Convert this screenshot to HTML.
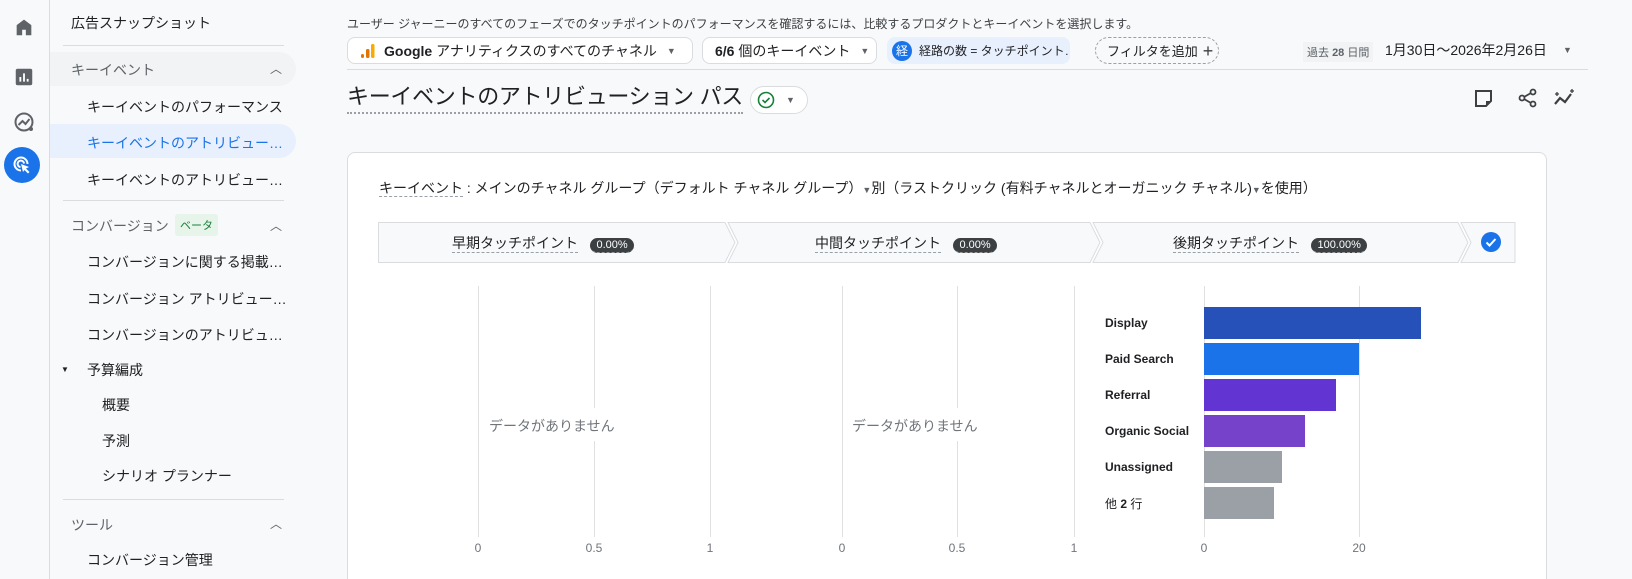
<!DOCTYPE html>
<html style="overflow:hidden;height:579px"><head><meta charset="utf-8">
<style>
*{margin:0;padding:0;box-sizing:border-box}
body{width:1632px;height:579px;overflow:hidden;background:#f8f9fa;font-family:"Liberation Sans","Noto Sans CJK JP",sans-serif;color:#3c4043;position:relative}
.a{position:absolute;white-space:nowrap}
.rail{left:0;top:0;width:50px;height:579px;border-right:1px solid #dadce0;background:#f8f9fa}
.nav{font-size:14px;color:#202124}
.sec{font-size:14px;color:#5f6368}
.div{height:1px;background:#dadce0;left:63px;width:221px}
.chev{font-size:12px;color:#5f6368}
.chip{border:1px solid #dadce0;border-radius:8px;background:#fff;height:27px;top:37px;font-size:14px;color:#202124;display:flex;align-items:center;padding-left:12px;overflow:hidden}
.grid{width:1px;background:#e0e0e0;top:286px;height:251px}
.ax{font-size:12px;color:#70757a;top:541px;transform:translateX(-50%)}
.bar{left:1204px;height:32px}
.bl{font-size:12px;color:#202124;font-weight:bold;left:1105px}
.badge{background:#3c4043;color:#fff;font-size:11px;border-radius:8px;padding:1px 6px;border-bottom:1px dashed #999}
.lbl{font-size:14px;color:#202124;border-bottom:1px dashed #9aa0a6;padding-bottom:1px}
</style></head><body>
<div class="a rail"></div>
<svg class="a" style="left:13px;top:16px" width="22" height="22" viewBox="0 0 24 24"><path d="M4 21V10l8-6 8 6v11h-6v-6h-4v6z" fill="#5f6368"/></svg>
<svg class="a" style="left:13px;top:66px" width="22" height="22" viewBox="0 0 24 24"><rect x="3" y="3" width="18" height="18" rx="2" fill="#5f6368"/><path d="M8 17v-5M12 17V8M16 17v-3" stroke="#fff" stroke-width="2"/></svg>
<svg class="a" style="left:12px;top:110px" width="24" height="24" viewBox="0 0 24 24"><circle cx="12" cy="12" r="8.5" fill="none" stroke="#5f6368" stroke-width="2"/><path d="M6.5 15l4-4 3 3 4-5" fill="none" stroke="#5f6368" stroke-width="2"/><circle cx="19" cy="19" r="2" fill="#5f6368"/></svg>
<div class="a" style="left:4px;top:147px;width:36px;height:36px;border-radius:50%;background:#1a73e8"></div>
<svg class="a" style="left:10px;top:153px" width="24" height="24" viewBox="0 0 24 24"><path d="M17.5 11a6.5 6.5 0 1 0-6.5 6.5" fill="none" stroke="#fff" stroke-width="2"/><path d="M14 10.5a3.2 3.2 0 1 0-3.5 3.5" fill="none" stroke="#fff" stroke-width="2"/><path d="M11 11l8 3-3 1.5 3.5 3.5-1.5 1.5-3.5-3.5L13 19z" fill="#fff"/></svg>

<div class="a nav" style="left:71px;top:13px">広告スナップショット</div>
<div class="a div" style="top:45px"></div>
<div class="a" style="left:50px;top:52px;width:246px;height:34px;background:#f1f3f4;border-radius:0 17px 17px 0"></div>
<div class="a sec" style="left:71px;top:60px">キーイベント</div>
<div class="a chev" style="left:270px;top:60px">︿</div>
<div class="a nav" style="left:87px;top:97px">キーイベントのパフォーマンス</div>
<div class="a" style="left:50px;top:124px;width:246px;height:34px;background:#e8f0fe;border-radius:0 17px 17px 0"></div>
<div class="a nav" style="left:87px;top:133px;color:#1a73e8">キーイベントのアトリビュー…</div>
<div class="a nav" style="left:87px;top:170px">キーイベントのアトリビュー…</div>
<div class="a div" style="top:200px"></div>
<div class="a sec" style="left:71px;top:216px">コンバージョン</div>
<div class="a" style="left:175px;top:214px;background:#e6f4ea;color:#188038;font-size:11px;padding:3px 5px;border-radius:3px">ベータ</div>
<div class="a chev" style="left:270px;top:217px">︿</div>
<div class="a nav" style="left:87px;top:252px">コンバージョンに関する掲載…</div>
<div class="a nav" style="left:87px;top:289px">コンバージョン アトリビュー…</div>
<div class="a nav" style="left:87px;top:325px">コンバージョンのアトリビュ…</div>
<div class="a" style="left:61px;top:365px;font-size:8px;color:#202124">▼</div>
<div class="a nav" style="left:87px;top:360px">予算編成</div>
<div class="a nav" style="left:102px;top:395px">概要</div>
<div class="a nav" style="left:102px;top:431px">予測</div>
<div class="a nav" style="left:102px;top:466px">シナリオ プランナー</div>
<div class="a div" style="top:499px"></div>
<div class="a sec" style="left:71px;top:515px">ツール</div>
<div class="a chev" style="left:270px;top:515px">︿</div>
<div class="a nav" style="left:87px;top:550px">コンバージョン管理</div>

<div class="a" style="left:347px;top:15px;font-size:12px;color:#3c4043">ユーザー ジャーニーのすべてのフェーズでのタッチポイントのパフォーマンスを確認するには、比較するプロダクトとキーイベントを選択します。</div>
<div class="a chip" style="left:347px;width:346px"><svg width="16" height="16" viewBox="0 0 16 16" style="margin-right:8px;flex-shrink:0"><rect x="1" y="11" width="3" height="4" rx="1.5" fill="#e37400"/><rect x="6" y="6" width="3.5" height="9" rx="1.5" fill="#e37400"/><rect x="11" y="1" width="3.5" height="14" rx="1.5" fill="#f9ab00"/></svg><b style="font-weight:600">Google</b>&nbsp;アナリティクスのすべてのチャネル<span style="font-size:9px;color:#5f6368;margin-left:10px">▼</span></div>
<div class="a chip" style="left:702px;width:175px"><b style="font-weight:600">6/6</b>&nbsp;個のキーイベント<span style="font-size:9px;color:#5f6368;margin-left:10px">▼</span></div>
<div class="a chip" style="left:887px;width:183px;background:#e8f0fe;border-color:#e8f0fe;padding-left:4px;font-size:12px"><span style="flex-shrink:0;width:20px;height:20px;border-radius:50%;background:#1a73e8;color:#fff;font-size:12px;display:inline-flex;align-items:center;justify-content:center;margin-right:7px">経</span>経路の数 = タッチポイント…</div>
<div class="a chip" style="left:1095px;width:124px;border:1px dashed #9aa0a6;border-radius:14px;background:transparent;font-size:13px;padding-left:11px">フィルタを追加<span style="font-size:18px;margin-left:5px;color:#3c4043;line-height:18px">+</span></div>
<div class="a" style="left:1303px;top:42px;background:#f1f3f4;font-size:11px;color:#5f6368;padding:2px 4px">過去 <b>28</b> 日間</div>
<div class="a" style="left:1385px;top:40px;font-size:14px;color:#202124">1月30日～2026年2月26日</div>
<div class="a" style="left:1563px;top:45px;font-size:9px;color:#5f6368">▼</div>
<div class="a" style="left:347px;top:69px;width:1241px;height:1px;background:#dadce0"></div>

<div class="a" style="left:347px;top:84px;font-size:22px;color:#202124;border-bottom:2px dotted #9aa0a6;padding-bottom:2px;line-height:26px;letter-spacing:-0.3px">キーイベントのアトリビューション パス</div>
<div class="a" style="left:750px;top:86px;width:58px;height:28px;border:1px solid #dadce0;border-radius:14px;background:#fff"></div>
<svg class="a" style="left:757px;top:91px" width="18" height="18" viewBox="0 0 18 18"><circle cx="9" cy="9" r="7.5" fill="none" stroke="#188038" stroke-width="1.6"/><path d="M5.5 9l2.5 2.5 4.5-4.5" fill="none" stroke="#188038" stroke-width="1.6"/></svg>
<div class="a" style="left:786px;top:95px;font-size:9px;color:#5f6368">▼</div>
<svg class="a" style="left:1474px;top:89px" width="19" height="19" viewBox="0 0 19 19"><path d="M2 2h15v10l-5 5H2z" fill="none" stroke="#3c4043" stroke-width="2"/><path d="M12 12h5l-5 5z" fill="#3c4043"/></svg>
<svg class="a" style="left:1518px;top:88px" width="20" height="20" viewBox="0 0 20 20"><circle cx="15" cy="4" r="2.5" fill="none" stroke="#3c4043" stroke-width="1.8"/><circle cx="4" cy="10" r="2.5" fill="none" stroke="#3c4043" stroke-width="1.8"/><circle cx="15" cy="16" r="2.5" fill="none" stroke="#3c4043" stroke-width="1.8"/><path d="M6 9l7-4M6 11l7 4" stroke="#3c4043" stroke-width="1.8"/></svg>
<svg class="a" style="left:1553px;top:88px" width="24" height="20" viewBox="0 0 24 20"><path d="M2 16l5-6 5 4 6-8" fill="none" stroke="#3c4043" stroke-width="2.2"/><path d="M4 4v4M2 6h4M19 1v4M17 3h4" stroke="#3c4043" stroke-width="1.3"/></svg>

<div class="a" style="left:347px;top:152px;width:1200px;height:427px;background:#fff;border:1px solid #dadce0;border-bottom:none;border-radius:8px 8px 0 0"></div>
<div class="a" style="left:379px;top:178px;font-size:14px;color:#202124"><span style="border-bottom:1px dashed #9aa0a6">キーイベント</span> : メインのチャネル グループ（デフォルト チャネル グループ）<span style="font-size:9px;color:#5f6368">▼</span>別（ラストクリック (有料チャネルとオーガニック チャネル)<span style="font-size:9px;color:#5f6368">▼</span>を使用）</div>

<svg class="a" style="left:378px;top:222px" width="1140" height="41" viewBox="0 0 1140 41">
<g fill="#f8f9fa" stroke="#dadce0" stroke-width="1">
<path d="M0.5 0.5H347L357 20.5 347 40.5H0.5z"/>
<path d="M350 0.5H712L722 20.5 712 40.5H350L360 20.5z"/>
<path d="M715 0.5H1080L1090 20.5 1080 40.5H715L725 20.5z"/>
<path d="M1083 0.5H1137V40.5H1083L1093 20.5z"/>
</g></svg>
<div class="a" style="left:452px;top:233px"><span class="lbl">早期タッチポイント</span> <span class="badge" style="margin-left:8px">0.00%</span></div>
<div class="a" style="left:815px;top:233px"><span class="lbl">中間タッチポイント</span> <span class="badge" style="margin-left:8px">0.00%</span></div>
<div class="a" style="left:1173px;top:233px"><span class="lbl">後期タッチポイント</span> <span class="badge" style="margin-left:8px">100.00%</span></div>
<svg class="a" style="left:1481px;top:232px" width="20" height="20" viewBox="0 0 20 20"><circle cx="10" cy="10" r="10" fill="#1a73e8"/><path d="M5.5 10.5l3 3 6-6.5" fill="none" stroke="#fff" stroke-width="2"/></svg>

<div class="a grid" style="left:478px"></div><div class="a grid" style="left:594px"></div><div class="a grid" style="left:710px"></div>
<div class="a grid" style="left:842px"></div><div class="a grid" style="left:957px"></div><div class="a grid" style="left:1074px"></div>
<div class="a grid" style="left:1204px"></div><div class="a grid" style="left:1359px"></div>
<div class="a" style="left:479px;top:408px;width:140px;height:33px;background:#fff"></div>
<div class="a" style="left:843px;top:408px;width:140px;height:33px;background:#fff"></div>
<div class="a" style="left:489px;top:416px;font-size:14px;color:#70757a">データがありません</div>
<div class="a" style="left:852px;top:416px;font-size:14px;color:#70757a">データがありません</div>
<div class="a ax" style="left:478px">0</div><div class="a ax" style="left:594px">0.5</div><div class="a ax" style="left:710px">1</div>
<div class="a ax" style="left:842px">0</div><div class="a ax" style="left:957px">0.5</div><div class="a ax" style="left:1074px">1</div>
<div class="a ax" style="left:1204px">0</div><div class="a ax" style="left:1359px">20</div>

<div class="a bar" style="top:307px;width:217px;background:#2651b8"></div>
<div class="a bar" style="top:343px;width:155px;background:#1a73e8"></div>
<div class="a bar" style="top:379px;width:132px;background:#6234d2"></div>
<div class="a bar" style="top:415px;width:101px;background:#7642c9"></div>
<div class="a bar" style="top:451px;width:78px;background:#9aa0a6"></div>
<div class="a bar" style="top:487px;width:70px;background:#9aa0a6"></div>
<div class="a bl" style="top:316px">Display</div>
<div class="a bl" style="top:352px">Paid Search</div>
<div class="a bl" style="top:388px">Referral</div>
<div class="a bl" style="top:424px">Organic Social</div>
<div class="a bl" style="top:460px">Unassigned</div>
<div class="a bl" style="top:495px;font-weight:normal">他 <b>2</b> 行</div>
</body></html>
